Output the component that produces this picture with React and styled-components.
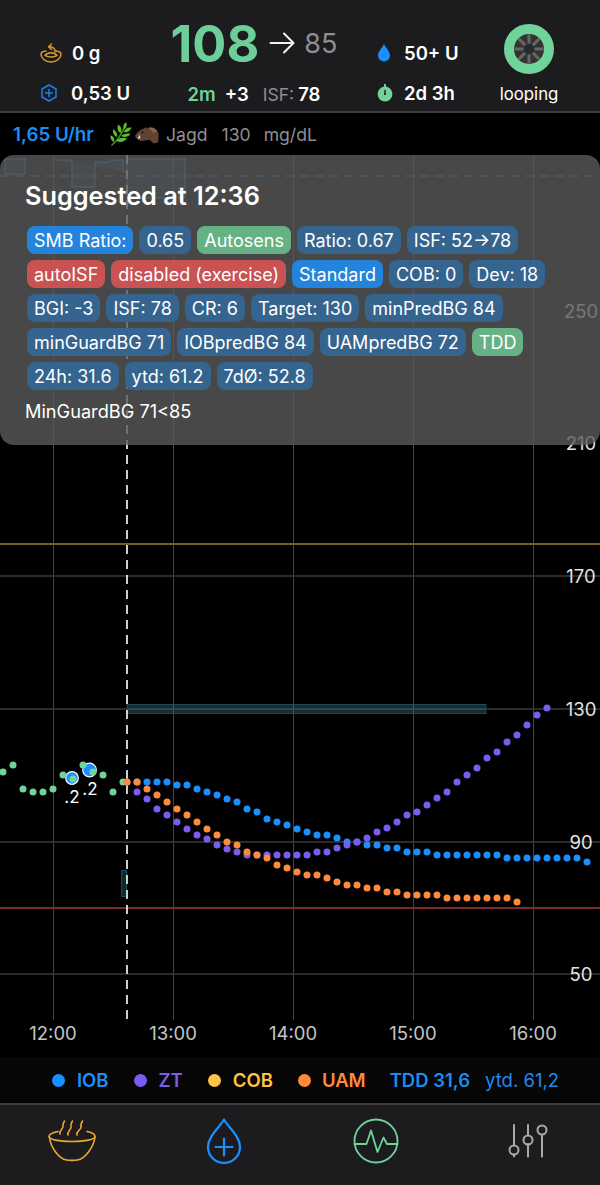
import React from 'react';
import styled, { createGlobalStyle } from 'styled-components';

const GlobalStyle = createGlobalStyle`
  html, body {
    margin: 0;
    padding: 0;
    background: #000;
  }
  body {
    font-family: Inter, "Liberation Sans", sans-serif;
  }
`;

const Screen = styled.div`
  width: 600px;
  height: 1185px;
  display: flex;
  flex-direction: column;
  overflow: hidden;
  background: #000;
  color: #fff;
`;

const Header = styled.header`
  height: 111px;
  flex: none;
  display: flex;
  padding-left: 40px;
  background: #1c1c1e;
  border-bottom: 2px solid #3c3c3e;
`;
const StatColumn = styled.div`
  width: ${p => p.$width}px;
  flex: none;
  display: flex;
  flex-direction: column;
  gap: 20px;
  padding-top: 43px;
`;
const StatRow = styled.div`
  height: 20px;
  display: flex;
  align-items: center;
  gap: ${p => p.$gap}px;
  font-size: 18.5px;
  font-weight: 600;
  white-space: nowrap;
`;
const CenterColumn = styled.div`
  width: 164px;
  margin-right: 41px;
  flex: none;
  display: flex;
  flex-direction: column;
  align-items: center;
  padding-top: 15px;
`;
const GlucoseRow = styled.div`
  height: 56px;
  display: flex;
  align-items: center;
  white-space: nowrap;
`;
const Glucose = styled.span`
  font-size: 50.5px;
  font-weight: 700;
  color: #6ccf9a;
  margin-right: 10px;
`;
const Eventual = styled.span`
  font-size: 27px;
  color: #8e8e93;
  margin-left: 8px;
`;
const DeltaRow = styled.div`
  height: 20px;
  margin-top: 13px;
  display: flex;
  align-items: center;
  font-size: 18.5px;
  font-weight: 600;
  white-space: nowrap;
`;
const Delta = styled.span`
  color: ${p => p.$color || '#fff'};
  font-weight: ${p => p.$weight || 600};
  font-size: ${p => p.$size || 18.5}px;
  margin-left: ${p => p.$left || 0}px;
`;
const LoopColumn = styled.div`
  width: 64px;
  flex: none;
  margin-left: -2px;
  display: flex;
  flex-direction: column;
  align-items: center;
  padding-top: 24px;
  font-size: 16.8px;
  gap: 10px;
`;

const SubRow = styled.div`
  height: 42px;
  flex: none;
  display: flex;
  align-items: center;
  padding-left: 13px;
  font-size: 17.6px;
  color: #8e8e93;
  white-space: nowrap;
`;
const Rate = styled.span`
  color: #1d8cf0;
  font-weight: 600;
  width: 97px;
  font-size: 18.8px;
`;
const ProfileText = styled.span`
  display: flex;
  margin-left: ${p => p.$left}px;
`;

const ChartArea = styled.div`
  position: relative;
  flex: 1;
  min-height: 0;
`;
const ChartSvg = styled.svg`
  display: block;
  width: 600px;
  height: 100%;
`;
const AxisLabel = styled.text`
  font-family: Inter, "Liberation Sans", sans-serif;
  font-size: ${p => p.$size || 18.5}px;
  fill: ${p => p.$fill || '#e2e2e2'};
`;

const Popover = styled.section`
  position: absolute;
  top: 0;
  left: 0;
  right: 0;
  height: 290px;
  box-sizing: border-box;
  padding: 26px 0 0 25px;
  border-radius: 14px;
  background: rgba(90, 90, 90, 0.8);
`;
const PopoverTitle = styled.h2`
  margin: 0;
  font-size: 25.3px;
  line-height: 30px;
  font-weight: 600;
`;
const ChipWrap = styled.div`
  display: flex;
  flex-wrap: wrap;
  gap: 6px;
  margin: 15px 0 0 2px;
`;
const chipColors = {
  blue: '#2484dc',
  dim: '#35648f',
  green: '#67b285',
  red: '#c95253',
};
const Chip = styled.span`
  height: 28px;
  padding: 0 7px;
  display: flex;
  align-items: center;
  border-radius: 8px;
  font-size: 18px;
  white-space: nowrap;
  background: ${p => chipColors[p.$kind || 'dim']};
`;
const Reason = styled.p`
  margin: 11px 0 0;
  font-size: 18.2px;
  line-height: 20px;
`;

const Legend = styled.div`
  height: 46px;
  flex: none;
  display: flex;
  align-items: center;
  padding-left: 52px;
  background: #060606;
  font-size: 18.5px;
  font-weight: 600;
  white-space: nowrap;
`;
const LegendDot = styled.span`
  width: 13px;
  height: 13px;
  border-radius: 50%;
  margin-right: ${p => p.$right || 12}px;
  background: ${p => p.$color};
`;
const LegendLabel = styled.span`
  color: ${p => p.$color};
  margin-right: ${p => p.$right}px;
  font-weight: ${p => p.$weight || 600};
`;

const TabBar = styled.nav`
  height: 82px;
  flex: none;
  box-sizing: border-box;
  display: grid;
  grid-template-columns: repeat(4, 152px);
  justify-content: center;
  align-items: center;
  padding-bottom: 8px;
  background: #1c1c1e;
  border-top: 2px solid #3c3c3e;
`;
const Tab = styled.div`
  display: flex;
  justify-content: center;
`;

const GREEN = '#6fd39a';
const BLUE = '#1a8fff';
const PURPLE = '#7a5cf0';
const ORANGE = '#ff8a3c';
const YELLOW = '#ffc445';

const greenDots = [
  [3, 772], [13, 765], [23, 789], [33, 792], [43, 792], [53, 789], [63, 775], [73, 779],
  [83, 765], [93, 772], [103, 775], [113, 792], [123, 782],
];
const series = (start, ys) => ys.map((y, i) => [start + i * 10, y]);
const blueDots = series(127, [
  782, 782, 782, 782, 782, 785, 785, 789, 792, 795, 799, 802, 809, 812, 819, 822, 825, 829,
  832, 835, 835, 838, 842, 842, 845, 845, 848, 848, 852, 852, 852, 855, 855, 855, 855, 855,
  855, 855, 858, 858, 858, 858, 858, 858, 858, 858, 862,
]);
const purpleDots = series(137, [
  792, 799, 809, 815, 822, 829, 835, 839, 845, 849, 852, 855, 855, 855, 855, 855, 855,
  855, 852, 852, 848, 845, 842, 838, 832, 828, 822, 815, 812, 805, 798, 792, 782,
  775, 768, 758, 752, 742, 735, 725, 715, 708,
]);
const orangeDots = series(127, [
  782, 782, 789, 795, 802, 809, 815, 822, 829, 835, 842, 845, 852, 855, 858, 865, 868, 872,
  875, 875, 878, 882, 885, 885, 888, 888, 892, 892, 895, 895, 895, 895, 898, 898, 898, 898,
  898, 898, 898, 902,
]);

const Dots = ({ points, color }) => (
  <g fill={color}>
    {points.map(([x, y]) => <circle key={x} cx={x} cy={y} r="3.5" />)}
  </g>
);

const MealIcon = () => (
  <svg width="22" height="20" viewBox="0 0 22 20" fill="none" stroke="#d69a2d" strokeWidth="1.5" strokeLinecap="round" strokeLinejoin="round">
    <path d="M6 8C2.500 8.500 1 10 1 11c0 4 4 8 10 8s10-4 10-8c0-1-1.500-2.500-5-3" />
    <path d="M5 12.500c1.500-2 3.500-2.800 6-2.800s4.500.8 6 2.800c-1.500 1-3.500 1.500-6 1.500s-4.500-.5-6-1.500z" />
    <path d="M15 9C15.500 5.500 13 3.800 9 3.800" />
    <path d="M11.500 1L8.500 3.800l3 2.700" />
  </svg>
);
const HexIcon = () => (
  <svg width="18" height="18" viewBox="0 0 18 18" fill="none" stroke="#1a80e8" strokeWidth="1.5" strokeLinecap="round" strokeLinejoin="round">
    <path d="M9 1l7 4v8l-7 4-7-4V5z" />
    <path d="M5.500 9h7M9 5.500v7" />
  </svg>
);
const ReservoirIcon = () => (
  <svg width="14" height="18" viewBox="0 0 14 18">
    <path d="M7 0C5.500 3.500 1 7.500 1 11.500a6 6 0 0 0 12 0C13 7.500 8.500 3.500 7 0z" fill="#1a8fff" />
  </svg>
);
const SensorIcon = () => (
  <svg width="16" height="18" viewBox="0 0 16 18">
    <circle cx="8" cy="10" r="7.4" fill={GREEN} />
    <path d="M8 0.500v2.500" stroke={GREEN} strokeWidth="2" strokeLinecap="round" />
    <path d="M8 6.500v3.500" stroke="#1c1c1e" strokeWidth="1.4" strokeLinecap="round" />
    <circle cx="8" cy="10" r="1" fill="#1c1c1e" />
  </svg>
);
const ArrowIcon = () => (
  <svg width="27" height="24" viewBox="0 0 27 24" fill="none" stroke="#f2f2f2" strokeWidth="2" strokeLinecap="round" strokeLinejoin="round">
    <path d="M1.500 12h23M15 2.500L24.500 12 15 21.500" />
  </svg>
);
const LoopIcon = () => {
  const angles = [0, 45, 90, 135, 180, 225, 270, 315];
  return (
    <svg width="50" height="50" viewBox="0 0 50 50">
      <circle cx="25" cy="25" r="20" fill="#333" stroke={GREEN} strokeWidth="10" />
      {angles.map(a => (
        <line key={a} x1="25" y1="19.500" x2="25" y2="10.500" stroke="#666" strokeWidth="3" transform={`rotate(${a} 25 25)`} />
      ))}
      <circle cx="25" cy="25" r="5" fill="#2a2a2a" />
    </svg>
  );
};
const LeafIcon = () => (
  <svg width="22" height="24" viewBox="0 0 22 24">
    <path d="M2 23C7 19 11 13 14 6" fill="none" stroke="#3f8f22" strokeWidth="1.6" strokeLinecap="round" />
    <g fill="#5dbb2f">
      <path d="M10.500 11C7.500 10 7 6 8 2.500c3 1.500 4.500 5 2.500 8.500z" />
      <path d="M14 7.500C12.500 5 13.500 2 16 0c1.500 2.800.5 6-2 7.500z" />
      <path d="M13.500 10c1-3 4.500-5 8-4.500-1 3.500-4.500 5.500-8 4.500z" />
      <path d="M7 15C4 14 2.500 10.500 3 7.500c3 1.200 5 4.500 4 7.500z" />
      <path d="M11 14c2-2 6-3 9.500-2-2 3-6 4-9.500 2z" />
      <path d="M6.500 19c2-3 6.500-4 10.500-2.500-2.500 3.500-7.500 4.500-10.500 2.500z" />
      <path d="M4 20C1.500 19 0 16 .5 13.500c3 .5 4.500 3.500 3.500 6.500z" />
    </g>
  </svg>
);
const BoarIcon = () => (
  <svg width="24" height="20" viewBox="0 0 24 20">
    <path d="M0.500 11C3 7 6 5.500 9 4.500L11 3l1 1.500C15 2 20 3 22.500 7c1.500 3 1.500 7 .5 11.500l-4.500 1L15 16c-2 0-3-.5-5 .5-3.500 1-7 0-9-2.500-.8-1-1-2-.5-3z" fill="#5f4436" />
    <path d="M14 4c3-1 6 0 8 3l-3 2c-2-2-4-3-5-5z" fill="#86634f" />
    <path d="M3 15c.5-2 1-3 1-5l1.500 4z" fill="#f3eee4" />
    <circle cx="7.500" cy="8.500" r="1" fill="#1b0f0a" />
  </svg>
);
const BowlTabIcon = () => (
  <svg width="48" height="44" viewBox="0 0 48 44" fill="none" stroke="#f0a92e" strokeWidth="1.6" strokeLinecap="round" strokeLinejoin="round">
    <path d="M10 12.500C5 13.500 1 15 1 17.500 1 20.500 11 22.500 24 22.500s23-2 23-5c0-2.500-3-4-8-5" />
    <path d="M1.500 18c1 11 10 22 17 23 4 .5 7 .5 11 0 7-1 16-12 17.500-23" />
    <path d="M12 15c-1.500-4 4.500-5 3-9 0-2 1-3 1.500-4" />
    <path d="M20 16c-1.500-4 4.500-5 3-10 0-2 1-3 1.500-4" />
    <path d="M29 16c-1.500-4 5.500-5 4-10 0-2 1-3 1.500-4" />
  </svg>
);
const DropTabIcon = () => (
  <svg width="36" height="46" viewBox="0 0 36 46" fill="none" stroke="#1a8fff" strokeWidth="2.2" strokeLinecap="round" strokeLinejoin="round">
    <path d="M18 1.500C14 9 2 18 2 29a16 16 0 0 0 32 0C34 18 22 9 18 1.500z" />
    <path d="M9.500 29h17M18 20.500v17" />
  </svg>
);
const PulseTabIcon = () => (
  <svg width="46" height="46" viewBox="0 0 46 46" fill="none" stroke={GREEN} strokeWidth="1.8" strokeLinecap="round" strokeLinejoin="round">
    <circle cx="23" cy="23" r="21.500" />
    <path d="M1.500 26h12L18 12.500 24.500 34 30.500 19.500 34 26h10.500" />
  </svg>
);
const SlidersTabIcon = () => (
  <svg width="42" height="34" viewBox="0 0 42 34" fill="none" stroke="#a9a9ab" strokeWidth="2">
    <path d="M7 1v20M7 30.500v2M21 1v10M21 20v12.500M35 12v20.500" strokeLinecap="round" />
    <circle cx="7" cy="26" r="4.500" />
    <circle cx="21" cy="16" r="4.500" />
    <circle cx="35" cy="6" r="4.500" />
  </svg>
);

const Chart = () => (
  <ChartSvg viewBox="0 155 600 902" preserveAspectRatio="none">
    <g stroke="#454545" strokeWidth="1">
      {[53, 173, 293, 413, 533].map(x => <line key={x} x1={x + 0.5} y1="155" x2={x + 0.5} y2="1020" />)}
    </g>
    <g stroke="#3a3a3a" strokeWidth="1.5">
      {[576, 709, 842, 974].map(y => <line key={y} x1="0" y1={y} x2="600" y2={y} />)}
    </g>
    <line x1="0" y1="544" x2="600" y2="544" stroke="#77601a" strokeWidth="2" />
    <line x1="0" y1="908" x2="600" y2="908" stroke="#7d2a2a" strokeWidth="2" />
    <line x1="0" y1="176" x2="600" y2="176" stroke="#3b82c4" strokeDasharray="9 6" />

    <path
      d="M5 159H25V174H5ZM55 160H72V187H90V187H95V162H110V160H123V172H127V159H185V198H127V172"
      fill="rgba(40,120,200,.22)"
      stroke="#2f80cc"
    />
    <rect x="127" y="704.500" width="359" height="9" fill="rgba(60,130,130,.35)" stroke="#1a4a5c" />
    <rect x="121.500" y="870.500" width="5" height="26" fill="#0c2a30" stroke="#1a4a5c" />
    <line x1="127" y1="155" x2="127" y2="1020" stroke="#e4e4e4" strokeWidth="1.8" strokeDasharray="9 6" />

    <circle cx="72" cy="778" r="6.3" fill={BLUE} stroke="#fff" strokeWidth="1.2" />
    <circle cx="89.500" cy="770" r="6.8" fill={BLUE} stroke="#fff" strokeWidth="1.2" />
    <Dots points={greenDots} color={GREEN} />
    <Dots points={blueDots} color={BLUE} />
    <Dots points={purpleDots} color={PURPLE} />
    <Dots points={orangeDots} color={ORANGE} />

    <AxisLabel x="72" y="803" textAnchor="middle" $fill="#fff" $size={17}>.2</AxisLabel>
    <AxisLabel x="90" y="795" textAnchor="middle" $fill="#fff" $size={17}>.2</AxisLabel>

    {[[250, 318], [210, 450], [170, 583], [130, 716], [90, 849], [50, 981]].map(([v, y]) => (
      <AxisLabel key={v} x="581" y={y} textAnchor="middle">{v}</AxisLabel>
    ))}
    {['12:00', '13:00', '14:00', '15:00', '16:00'].map((t, i) => (
      <AxisLabel key={t} x={53 + i * 120} y="1040" textAnchor="middle" $fill="#c4c4c4">{t}</AxisLabel>
    ))}
  </ChartSvg>
);

const chips = [
  ['SMB Ratio:', 'blue'], ['0.65'], ['Autosens', 'green'], ['Ratio: 0.67'], ['ISF: 52→78'],
  ['autoISF', 'red'], ['disabled (exercise)', 'red'], ['Standard', 'blue'], ['COB: 0'], ['Dev: 18'],
  ['BGI: -3'], ['ISF: 78'], ['CR: 6'], ['Target: 130'], ['minPredBG 84'],
  ['minGuardBG 71'], ['IOBpredBG 84'], ['UAMpredBG 72'], ['TDD', 'green'],
  ['24h: 31.6'], ['ytd: 61.2'], ['7dØ: 52.8'],
];

const App = () => (
  <Screen>
    <GlobalStyle />
    <Header>
      <StatColumn $width={132}>
        <StatRow $gap={10}><MealIcon />0 g</StatRow>
        <StatRow $gap={13}><HexIcon />0,53 U</StatRow>
      </StatColumn>
      <CenterColumn>
        <GlucoseRow>
          <Glucose>108</Glucose>
          <ArrowIcon />
          <Eventual>85</Eventual>
        </GlucoseRow>
        <DeltaRow>
          <Delta $color={GREEN}>2m</Delta>
          <Delta $left={9}>+3</Delta>
          <Delta $left={14} $color="#8e8e93" $weight={400} $size={17.5}>ISF:</Delta>
          <Delta $left={4}>78</Delta>
        </DeltaRow>
      </CenterColumn>
      <StatColumn $width={122}>
        <StatRow $gap={13}><ReservoirIcon />50+ U</StatRow>
        <StatRow $gap={11}><SensorIcon />2d 3h</StatRow>
      </StatColumn>
      <LoopColumn>
        <LoopIcon />
        <span>looping</span>
      </LoopColumn>
    </Header>

    <SubRow>
      <Rate>1,65 U/hr</Rate>
      <LeafIcon />
      <ProfileText $left={3}><BoarIcon /></ProfileText>
      <ProfileText $left={7}>Jagd</ProfileText>
      <ProfileText $left={14}>130</ProfileText>
      <ProfileText $left={13}>mg/dL</ProfileText>
    </SubRow>

    <ChartArea>
      <Chart />
      <Popover>
        <PopoverTitle>Suggested at 12:36</PopoverTitle>
        <ChipWrap>
          {chips.map(([label, kind]) => <Chip key={label} $kind={kind}>{label}</Chip>)}
        </ChipWrap>
        <Reason>MinGuardBG 71&lt;85</Reason>
      </Popover>
    </ChartArea>

    <Legend>
      <LegendDot $color={BLUE} /><LegendLabel $color={BLUE} $right={25}>IOB</LegendLabel>
      <LegendDot $color={PURPLE} /><LegendLabel $color={PURPLE} $right={25}>ZT</LegendLabel>
      <LegendDot $color={YELLOW} /><LegendLabel $color={YELLOW} $right={25}>COB</LegendLabel>
      <LegendDot $color={ORANGE} $right={11} /><LegendLabel $color={ORANGE} $right={24}>UAM</LegendLabel>
      <LegendLabel $color="#1d8cf0" $right={15}>TDD 31,6</LegendLabel>
      <LegendLabel $color="#1d8cf0" $right={0} $weight={400}>ytd. 61,2</LegendLabel>
    </Legend>

    <TabBar>
      <Tab><BowlTabIcon /></Tab>
      <Tab><DropTabIcon /></Tab>
      <Tab><PulseTabIcon /></Tab>
      <Tab><SlidersTabIcon /></Tab>
    </TabBar>
  </Screen>
);

export default App;
